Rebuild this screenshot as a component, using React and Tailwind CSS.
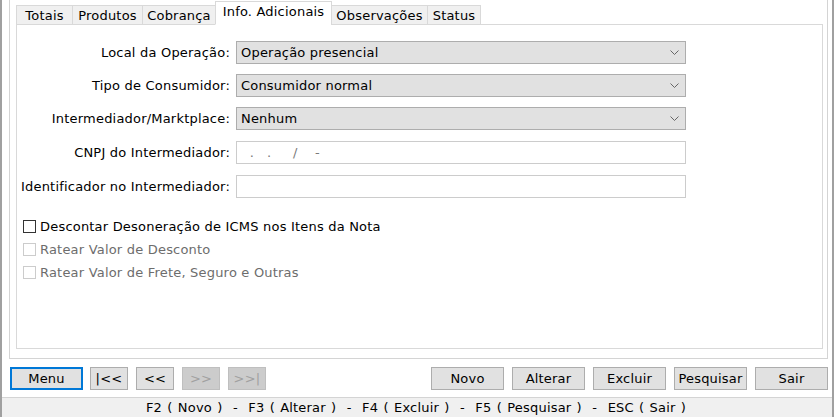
import React from "react";

const font = { fontFamily: '"DejaVu Sans", Verdana, sans-serif', letterSpacing: "0.2px" };

function Chevron() {
  return (
    <svg width="9" height="6" viewBox="0 0 9 6" className="shrink-0">
      <polyline points="0.5,0.5 4.5,4.5 8.5,0.5" fill="none" stroke="#666" strokeWidth="1" />
    </svg>
  );
}

function Select({ value }) {
  return (
    <div className="w-[450px] h-[23px] bg-[#e1e1e1] border border-[#adadad] flex items-center pl-[4px] pr-[6px] text-black">
      <span className="flex-1">{value}</span>
      <Chevron />
    </div>
  );
}

function Input({ children }) {
  return (
    <div className="w-[450px] h-[23px] bg-white border border-[#cccccc] flex items-center pl-[4px] text-[#7a7a7a] whitespace-pre">
      {children}
    </div>
  );
}

function Row({ label, children }) {
  return (
    <div className="flex items-center h-[23px]">
      <div className="w-[219px] text-right pr-[6px] text-black whitespace-nowrap">{label}</div>
      {children}
    </div>
  );
}

function Check({ label, disabled }) {
  return (
    <div className="flex items-center h-[13px] gap-[4px]">
      <div className={"w-[13px] h-[13px] bg-white border shrink-0 " + (disabled ? "border-[#cccccc]" : "border-[#333333]")} />
      <span className={disabled ? "text-[#6d6d6d]" : "text-black"}>{label}</span>
    </div>
  );
}

function Btn({ children, w, disabled, focus }) {
  let cls = "h-[23px] flex items-center justify-center shrink-0 ";
  if (focus) cls += "bg-[#e1e1e1] border-2 border-[#0078d7] text-black";
  else if (disabled) cls += "bg-[#cccccc] border border-[#bfbfbf] text-[#a0a0a0]";
  else cls += "bg-[#e1e1e1] border border-[#adadad] text-black";
  return (
    <div className={cls} style={{ width: w }}>
      {children}
    </div>
  );
}

const tabs = [
  ["Totais", 56],
  ["Produtos", 70],
  ["Cobrança", 73],
  ["Info. Adicionais", 116],
  ["Observações", 96],
  ["Status", 53],
];

export default function App() {
  return (
    <div className="w-[834px] h-[417px] bg-white text-[13px] leading-none flex flex-col overflow-hidden border-l-2 border-r-2 border-[#a0a0a0]" style={font}>
      {/* main group */}
      <div className="ml-[7px] w-[819px] h-[359px] border-l border-r border-b border-[#d4d4d4] pl-[6px] pt-[2px] shrink-0">
        {/* tabs */}
        <div className="flex items-end h-[23px] -mb-[1px] relative z-10">
          {tabs.map(([t, w], i) => {
            const active = i === 3;
            return (
              <div
                key={t}
                className={
                  "flex items-center justify-center border border-[#d9d9d9] -mr-[1px] whitespace-nowrap " +
                  (active ? "h-[24px] bg-white border-b-white pb-[3px]" : "h-[20px] bg-[#f0f0f0] pt-[1px]")
                }
                style={{ width: w + 1 }}
              >
                {t}
              </div>
            );
          })}
        </div>
        {/* panel */}
        <div className="w-[807px] h-[325px] border border-[#d9d9d9] bg-white pt-[16px]">
          <div className="flex flex-col gap-[10px]">
            <Row label="Local da Operação:"><Select value="Operação presencial" /></Row>
            <Row label="Tipo de Consumidor:"><Select value="Consumidor normal" /></Row>
            <Row label="Intermediador/Marktplace:"><Select value="Nenhum" /></Row>
            <div className="mt-[1px]">
              <Row label="CNPJ do Intermediador:"><Input>{"  .   .     /    -"}</Input></Row>
            </div>
            <div className="mt-[1px]">
              <Row label="Identificador no Intermediador:"><Input>{""}</Input></Row>
            </div>
          </div>
          <div className="flex flex-col gap-[10px] pl-[6px] mt-[22px]">
            <Check label="Descontar Desoneração de ICMS nos Itens da Nota" />
            <Check label="Ratear Valor de Desconto" disabled />
            <Check label="Ratear Valor de Frete, Seguro e Outras" disabled />
          </div>
        </div>
      </div>
      {/* buttons */}
      <div className="flex h-[23px] mt-[8px] pl-[8px] shrink-0">
        <Btn w={73} focus>Menu</Btn>
        <div className="flex gap-[8px] ml-[7px]">
          <Btn w={38}>|&lt;&lt;</Btn>
          <Btn w={38}>&lt;&lt;</Btn>
          <Btn w={38} disabled>&gt;&gt;</Btn>
          <Btn w={38} disabled>&gt;&gt;|</Btn>
        </div>
        <div className="flex gap-[8px] ml-auto mr-[4px]">
          <Btn w={73}>Novo</Btn>
          <Btn w={73}>Alterar</Btn>
          <Btn w={73}>Excluir</Btn>
          <Btn w={73}>Pesquisar</Btn>
          <Btn w={73}>Sair</Btn>
        </div>
      </div>
      {/* status bar */}
      <div className="mt-[7px] flex-1 bg-[#f0f0f0] border-t border-[#d4d4d4] flex items-center justify-center text-black whitespace-pre [word-spacing:0.9px] pr-[2px]">
        {"F2 ( Novo )  -  F3 ( Alterar )  -  F4 ( Excluir )  -  F5 ( Pesquisar )  -  ESC ( Sair )"}
      </div>
    </div>
  );
}
